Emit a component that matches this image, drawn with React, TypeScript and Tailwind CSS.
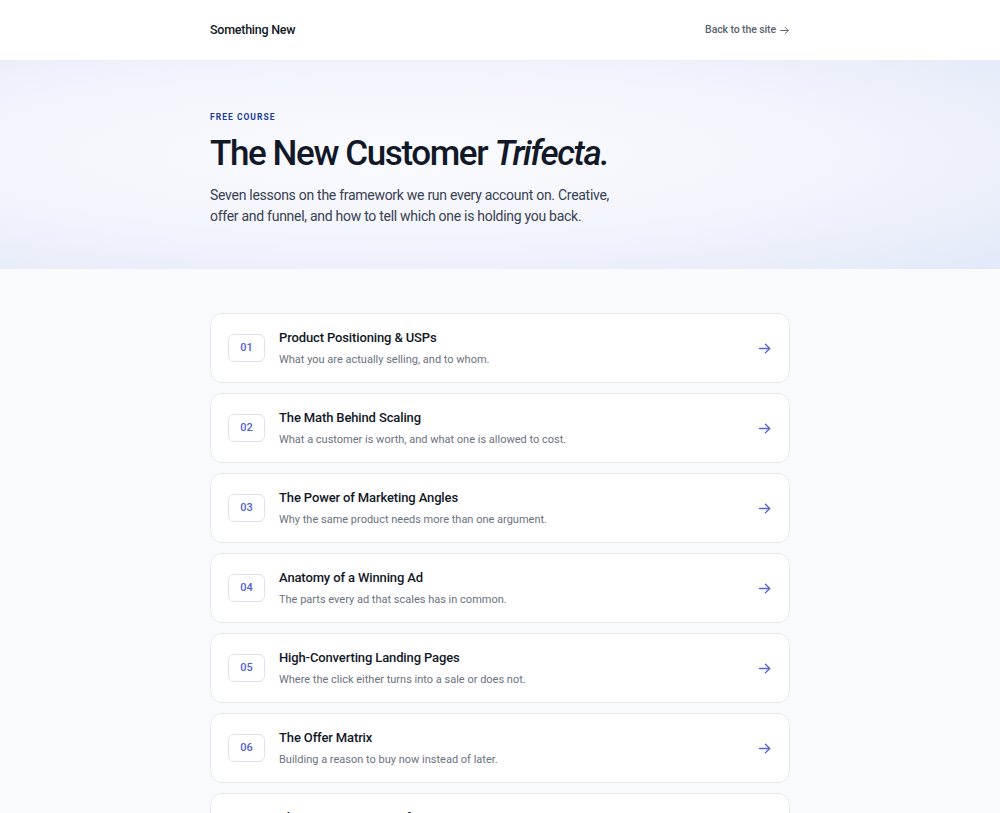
import React from "react";

const lessons = [
  { n: "01", t: "Product Positioning & USPs", d: "What you are actually selling, and to whom." },
  { n: "02", t: "The Math Behind Scaling", d: "What a customer is worth, and what one is allowed to cost." },
  { n: "03", t: "The Power of Marketing Angles", d: "Why the same product needs more than one argument." },
  { n: "04", t: "Anatomy of a Winning Ad", d: "The parts every ad that scales has in common." },
  { n: "05", t: "High-Converting Landing Pages", d: "Where the click either turns into a sale or does not." },
  { n: "06", t: "The Offer Matrix", d: "Building a reason to buy now instead of later." },
  { n: "07", t: "The New Customer Trifecta", d: "Putting creative, offer and funnel together." },
];

function Arrow({ className }: { className?: string }) {
  return (
    <svg viewBox="0 0 16 16" className={className} fill="none" stroke="currentColor" strokeWidth="1.4" strokeLinecap="round" strokeLinejoin="round">
      <path d="M2.5 8h11" />
      <path d="M9 3.5L13.5 8 9 12.5" />
    </svg>
  );
}

export default function App() {
  return (
    <div className="min-h-screen bg-[#f9fafc] text-[#111827]" style={{ fontFamily: "Roboto, 'Noto Sans', sans-serif" }}>
      <header className="h-[61px] bg-white border-b border-[#eceef3]">
        <div className="mx-auto w-[580px] h-full flex items-center justify-between">
          <div className="text-[12.5px] font-medium tracking-[-0.02em] text-[#111827]">Something New</div>
          <a className="flex items-center gap-[3px] text-[10.5px] font-medium tracking-[-0.01em] text-[#5b6170]">
            Back to the site
            <Arrow className="w-[11px] h-[11px]" />
          </a>
        </div>
      </header>
      <section className="h-[208px] bg-[radial-gradient(ellipse_at_40%_45%,#fafbff_0%,#f3f5fc_50%,#e3e9f9_100%)]">
        <div className="mx-auto w-[580px] pt-[50px]">
          <div className="text-[8.5px] font-bold tracking-[0.12em] text-[#1e3a9a]">FREE COURSE</div>
          <h1 className="mt-[8px] text-[35px] leading-[44px] font-medium tracking-[-0.04em] text-[#111827]">
            The New Customer <em className="italic">Trifecta.</em>
          </h1>
          <p className="mt-[9px] w-[412px] text-[14px] leading-[21px] text-[#374151] tracking-[-0.02em]">
            Seven lessons on the framework we run every account on. Creative, offer and funnel, and how to tell which one is holding you back.
          </p>
        </div>
      </section>
      <main className="mx-auto w-[580px] pt-[44px] pb-10 flex flex-col gap-[10px]">
        {lessons.map((l) => (
          <div key={l.n} className="h-[70px] bg-white border border-[#e6e8ee] rounded-[12px] flex items-center pl-[17px] pr-[17px]">
            <div className="w-[37px] h-[28px] rounded-[6px] border border-[#dde2f2] flex items-center justify-center text-[11px] font-medium text-[#4f5fd6]">
              {l.n}
            </div>
            <div className="ml-[14px] flex-1 pt-[1px]">
              <div className="text-[13px] font-medium tracking-[-0.01em] text-[#111827] leading-[18px]">{l.t}</div>
              <div className="mt-[5px] text-[11px] text-[#6b7280] leading-[16px]">{l.d}</div>
            </div>
            <Arrow className="w-[15px] h-[15px] text-[#5566d6]" />
          </div>
        ))}
      </main>
    </div>
  );
}
